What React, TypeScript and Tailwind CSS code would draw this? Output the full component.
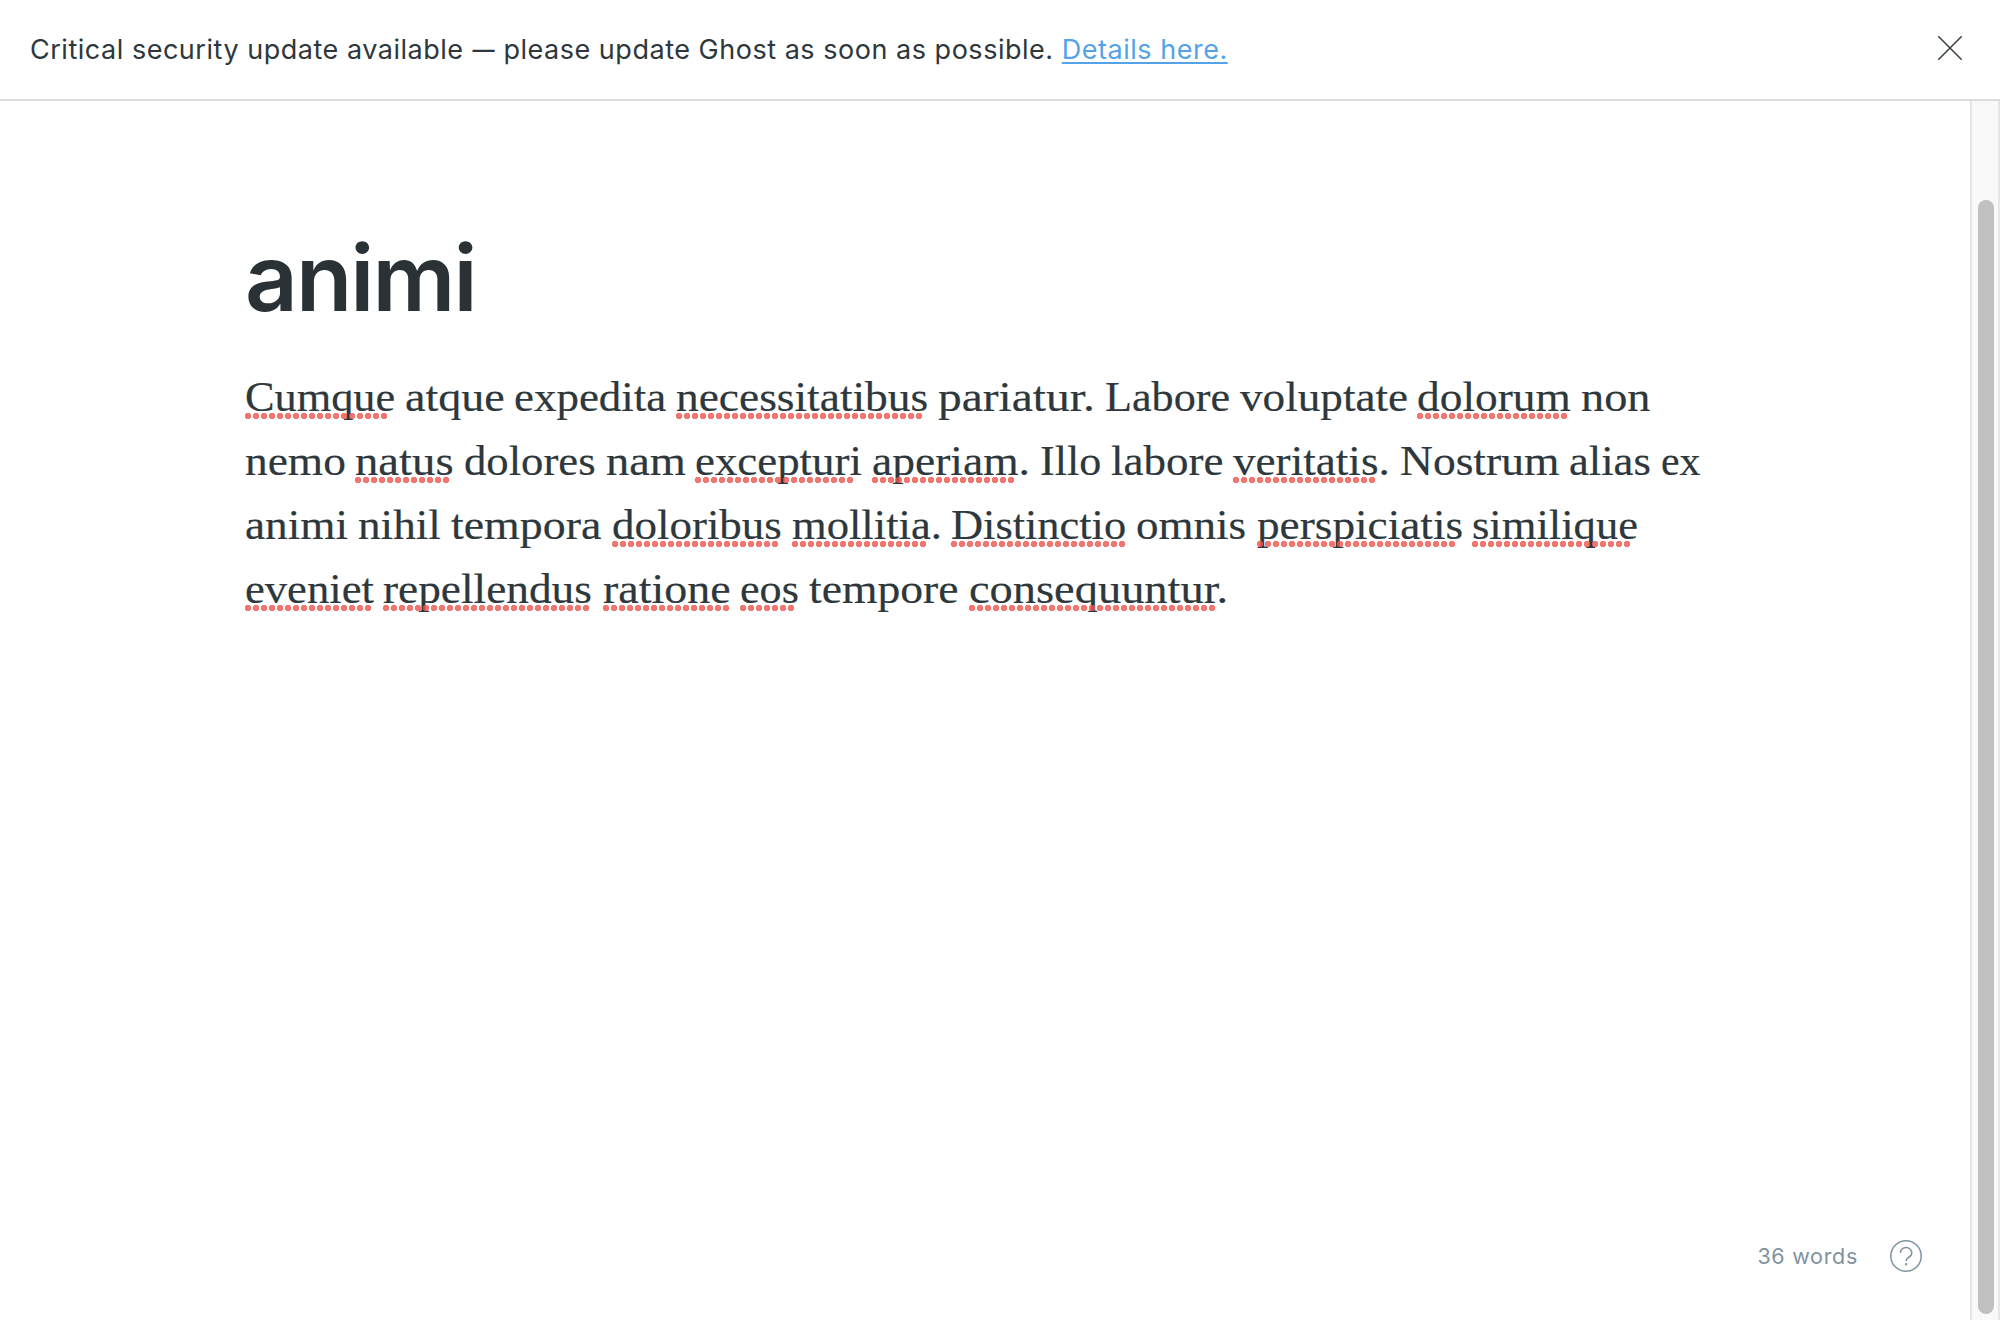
import { useLayoutEffect, useRef, useState } from "react";

const ADVANCE: Record<string, number> = {
  a: 1032, b: 1147, c: 930, d: 1176, e: 991, f: 666, g: 1043, h: 1192, i: 600, j: 597, k: 1094, l: 586, m: 1802,
  n: 1210, o: 1104, p: 1170, q: 1146, r: 838, s: 885, t: 708, u: 1178, v: 1018, w: 1512, x: 1030, y: 1008,
  C: 1315, D: 1535, I: 799, L: 1235, N: 1571, ".": 552,
};
const TRACKING = 0.205;

// Words that start with an underscore carry the spelling mark.
const BODY =
  "_Cumque atque expedita _necessitatibus pariatur. Labore voluptate _dolorum non nemo _natus dolores nam _excepturi _aperiam. Illo labore _veritatis. Nostrum alias ex animi nihil tempora _doloribus _mollitia. _Distinctio omnis _perspiciatis _similique _eveniet _repellendus _ratione _eos tempore _consequuntur.";

const measure = (s: string) =>
  [...s].reduce((sum, ch) => sum + ((ADVANCE[ch] ?? 1000) * 40) / 2048 + TRACKING, 0);

function Word({ token }: { token: string }) {
  const misspelled = token.startsWith("_");
  const text = token.replace("_", "");
  const width = measure(text);
  const dots = Math.floor((measure(text.replace(".", "")) + 0.8) / 8) * 8;
  const ref = useRef<HTMLSpanElement>(null);
  const [scale, setScale] = useState(1.1);

  useLayoutEffect(() => {
    if (ref.current) setScale(width / ref.current.offsetWidth);
  }, [width]);

  return (
    <span className="relative block h-16" style={{ width }}>
      <span ref={ref} className="inline-block origin-left whitespace-nowrap" style={{ transform: `scaleX(${scale})` }}>
        {text}
      </span>
      {misspelled && (
        <span
          className="absolute left-0 top-12 h-1.5 bg-[radial-gradient(circle_at_3px_3px,#f0524b_2.9px,transparent_3.5px)] bg-[length:8px_6px] bg-repeat-x opacity-80"
          style={{ width: dots }}
        />
      )}
    </span>
  );
}

export default function App() {
  return (
    <div className="flex h-[1320px] w-[2000px] flex-col overflow-hidden bg-white font-['Inter',sans-serif] text-[#2e383c]">
      <header className="flex h-[101px] shrink-0 items-center justify-between border-b-2 border-[#dadddd] pl-[30px] pr-[38px]">
        <p className="mt-px whitespace-nowrap text-[27px] leading-10 tracking-[0.52px]">
          Critical security update available <span className="-mx-[2px] inline-block scale-x-[0.82]">—</span> please
          update Ghost as soon as possible.{" "}
          <a className="text-[#54a3e8] underline decoration-2 underline-offset-[3px]">Details here.</a>
        </p>
        <svg className="mb-[3px] size-6" viewBox="0 0 24 24" fill="none" stroke="#343f44" strokeWidth="1.5">
          <path d="M.3.3l23.4 23.4M23.7.3.3 23.7" />
        </svg>
      </header>
      <div className="flex min-h-0 flex-1">
        <main className="flex flex-1 flex-col justify-between">
          <div className="ml-[245px] w-[1480px] pt-[122px]">
            <h1 className="h-[110px] text-[92px] font-semibold leading-[110px] tracking-[-1.9px] text-[#2a3236]">animi</h1>
            <div className="mt-8 flex flex-wrap gap-x-[9.85px] font-['Liberation_Serif',serif] text-[42px] leading-[64px] [-webkit-text-stroke:0.2px_#2e383c]">
              {BODY.split(" ").map((t, i) => (
                <Word key={i} token={t} />
              ))}
            </div>
          </div>
          <footer className="mb-12 flex h-8 items-center justify-end gap-8 pr-12 text-[#7f939e]">
            <span className="text-[21.5px] tracking-[0.7px]">36 words</span>
            <svg className="size-8" viewBox="0 0 32 32" fill="none" stroke="currentColor" strokeWidth="1.5">
              <circle cx="16" cy="16" r="15.25" />
              <path d="M10.5 12.9a5.6 5.5 0 0 1 11.2 0c0 2.6-1.7 3.7-3.3 4.6-1.5.9-2.3 1.7-2.3 3.7" />
              <circle cx="16.1" cy="24.2" r=".5" />
            </svg>
          </footer>
        </main>
        <aside className="w-[30px] border-x-2 border-[#e6e6e6] bg-[#f9f9f9] pl-1.5 pt-[99px]">
          <div className="h-[1114px] w-4 rounded-full bg-[#c0c0c0]" />
        </aside>
      </div>
    </div>
  );
}
